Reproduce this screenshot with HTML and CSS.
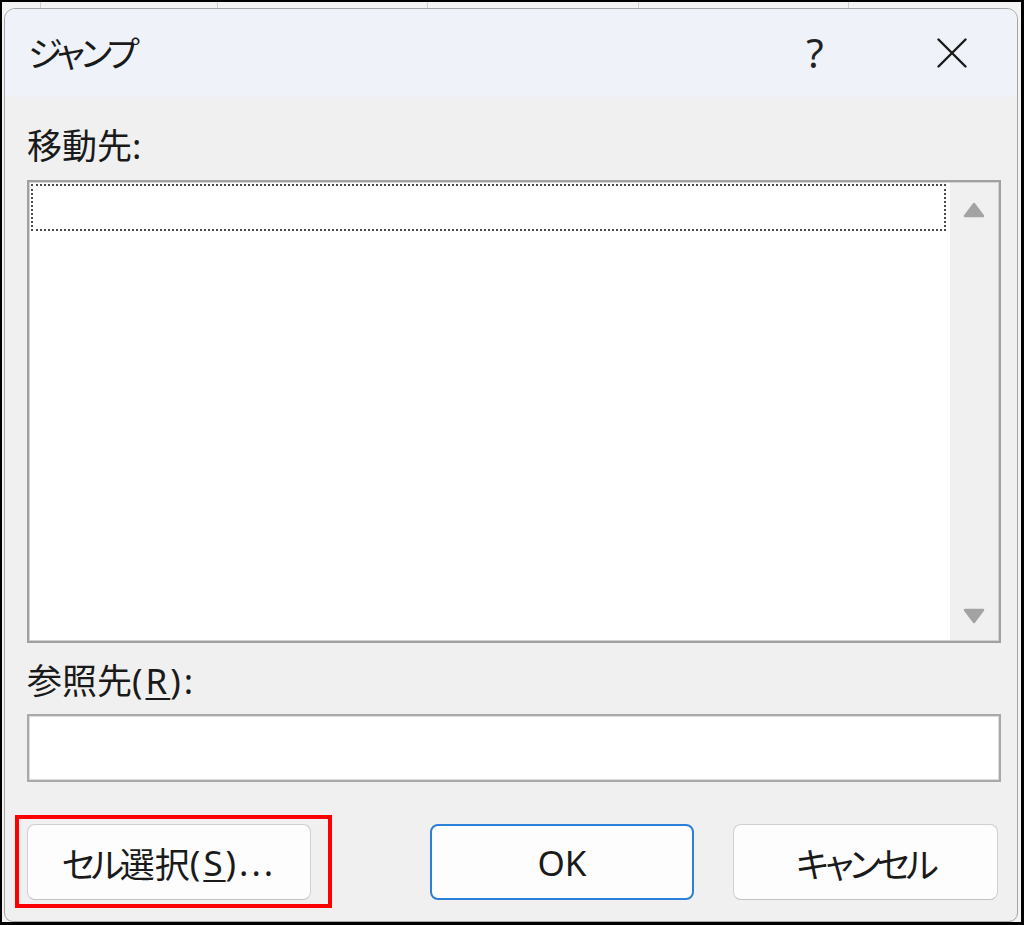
FILE: index.html
```html
<!DOCTYPE html>
<html lang="ja">
<head>
<meta charset="utf-8">
<title>ジャンプ</title>
<link rel="stylesheet" href="styles.css">
</head>
<body>
<div class="frame">
  <div class="dialog">
    <div class="titlebar">
      <span class="title kana">ジャンプ</span>
      <span class="help">?</span>
      <svg class="close" viewBox="0 0 30 30" aria-hidden="true">
        <path d="M1.5 1.5 L28.5 28.5 M28.5 1.5 L1.5 28.5" stroke="#1a1a1a" stroke-width="2.4" stroke-linecap="round" fill="none"/>
      </svg>
    </div>
    <div class="content">
      <div class="label label-top">移動先<span class="latin">:</span></div>
      <div class="listbox">
        <div class="list">
          <div class="focus"></div>
        </div>
        <div class="scrollbar">
          <svg class="arrow" viewBox="0 0 22 16" aria-hidden="true"><polygon points="11,2 20,14 2,14" fill="#a3a3a3" stroke="#a3a3a3" stroke-width="2.5" stroke-linejoin="round"/></svg>
          <svg class="arrow" viewBox="0 0 22 16" aria-hidden="true"><polygon points="2,2 20,2 11,14" fill="#a3a3a3" stroke="#a3a3a3" stroke-width="2.5" stroke-linejoin="round"/></svg>
        </div>
      </div>
      <div class="label label-ref">参照先<span class="latin">(<u>R</u>):</span></div>
      <div class="input"></div>
      <div class="buttons">
        <div class="highlight">
          <div class="btn btn-select"><span class="kana">セル</span>選択<span class="latin">(<u>S</u>)...</span></div>
        </div>
        <div class="btn btn-ok">OK</div>
        <div class="btn btn-cancel"><span class="kana">キャンセル</span></div>
      </div>
    </div>
  </div>
</div>
</body>
</html>
```

FILE: styles.css
```css
* {
  box-sizing: border-box;
  margin: 0;
  padding: 0;
}

body {
  margin: 0;
  width: 1024px;
  height: 925px;
  overflow: hidden;
  font-family: "Noto Sans", "Noto Sans CJK JP", sans-serif;
  color: #1a1a1a;
  background: #ffffff;
}

.frame {
  width: 1024px;
  height: 925px;
  border-style: solid;
  border-color: #000;
  border-width: 2px 3px 3px 2px;
  background-color: #f3f3f3;
  background-image: repeating-linear-gradient(to right, #cfcfcf 0 1px, transparent 1px 210.5px);
  background-position: 215px 0;
  padding: 6px 3px 0 2px;
  display: flex;
  flex-direction: column;
}

.dialog {
  flex: 1;
  border: 1px solid #a6a6a6;
  border-radius: 11px 11px 9px 9px;
  background: #f0f0f0;
  overflow: hidden;
  display: flex;
  flex-direction: column;
}

.titlebar {
  height: 88px;
  flex: none;
  background: #eff2f8;
  display: flex;
  align-items: center;
  padding-left: 23px;
}

.title {
  font-size: 35px;
  line-height: 42px;
  margin-top: 2px;
}

.kana {
  font-feature-settings: "palt";
  letter-spacing: -4px;
}

.latin {
  letter-spacing: 3px;
}

.help {
  margin-left: auto;
  width: 40px;
  text-align: center;
  font-family: "Noto Sans", sans-serif;
  font-size: 40px;
  line-height: 42px;
  color: #222;
}

.close {
  width: 30px;
  height: 30px;
  margin-left: 102px;
  margin-right: 50px;
}

.content {
  padding: 0 16px 0 22px;
  display: flex;
  flex-direction: column;
}

.label {
  font-size: 35px;
  line-height: 42px;
}

.label u,
.btn u {
  text-decoration-thickness: 2px;
  text-underline-offset: 4px;
}

.label-top {
  margin-top: 28px;
  margin-bottom: 13px;
}

.listbox {
  height: 463px;
  border: 2px solid #a0a0a0;
  box-shadow: inset 0 0 0 1px #d2d2d2;
  display: flex;
  padding: 1px;
}

.list {
  flex: 1;
  background: #fff;
  padding: 1px 4px 0 1px;
}

.focus {
  height: 47px;
  border: 2px dotted #4a4a4a;
}

.scrollbar {
  width: 48px;
  background: #f0f0f0;
  display: flex;
  flex-direction: column;
  justify-content: space-between;
  align-items: center;
  padding: 19px 0 16px;
}

.arrow {
  width: 22px;
  height: 16px;
}

.label-ref {
  margin-top: 17px;
  margin-bottom: 12px;
}

.input {
  height: 68px;
  background: #fff;
  border: 2px solid #a9a9a9;
  box-shadow: inset 0 0 0 1px #dcdcdc;
}

.buttons {
  margin-top: 33px;
  display: flex;
  align-items: flex-start;
}

.highlight {
  margin-left: -12px;
  border: 4px solid #ff0000;
  padding: 5px 17px 4px 8px;
}

.btn {
  height: 76px;
  background: #fdfdfd;
  border: 1px solid #d0d0d0;
  border-bottom-color: #c2c2c2;
  border-radius: 8px;
  font-size: 35px;
  display: flex;
  align-items: center;
  justify-content: center;
}

.btn-select {
  width: 284px;
}

.btn-ok {
  width: 264px;
  margin-top: 9px;
  margin-left: auto;
  border: 2px solid #2b7fd6;
}

.btn-cancel {
  width: 265px;
  margin-top: 9px;
  margin-left: 39px;
  margin-right: 3px;
}
```
